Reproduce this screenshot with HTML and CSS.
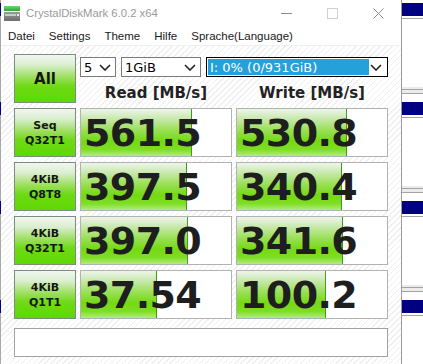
FILE: index.html
```html
<!DOCTYPE html>
<html>
<head>
<meta charset="utf-8">
<link rel="stylesheet" href="styles.css">
</head>
<body>
<div class="screen">
  <div class="bg-strip left"></div>
  <div class="window">
    <div class="titlebar">
      <svg class="app-icon" width="16" height="16" viewBox="0 0 16 16">
        <defs>
          <linearGradient id="gbar" x1="0" y1="0" x2="0" y2="1">
            <stop offset="0" stop-color="#6fd66f"/>
            <stop offset="1" stop-color="#2ea82e"/>
          </linearGradient>
          <linearGradient id="gbody" x1="0" y1="0" x2="0" y2="1">
            <stop offset="0" stop-color="#9a9a9a"/>
            <stop offset="1" stop-color="#6e6e6e"/>
          </linearGradient>
        </defs>
        <rect x="0" y="1" width="16" height="5" fill="url(#gbar)"/>
        <rect x="0" y="7" width="16" height="9" fill="url(#gbody)"/>
        <rect x="1" y="9" width="11" height="2" fill="#c9c9c9"/>
        <rect x="13" y="9" width="2" height="2" fill="#eeeeee"/>
      </svg>
      <span class="title">CrystalDiskMark 6.0.2 x64</span>
      <div class="caption-buttons">
        <div class="cap-btn">
          <svg width="11" height="11" viewBox="0 0 11 11"><line x1="0" y1="5.5" x2="11" y2="5.5" stroke="#8c8c8c" stroke-width="1"/></svg>
        </div>
        <div class="cap-btn">
          <svg width="11" height="11" viewBox="0 0 11 11"><rect x="0.5" y="0.5" width="10" height="10" fill="none" stroke="#d0d0d0" stroke-width="1"/></svg>
        </div>
        <div class="cap-btn">
          <svg width="11" height="11" viewBox="0 0 11 11"><path d="M0.5 0.5 L10.5 10.5 M10.5 0.5 L0.5 10.5" stroke="#8c8c8c" stroke-width="1" fill="none"/></svg>
        </div>
      </div>
    </div>
    <div class="menubar">
      <span class="menu-item">Datei</span>
      <span class="menu-item">Settings</span>
      <span class="menu-item">Theme</span>
      <span class="menu-item">Hilfe</span>
      <span class="menu-item">Sprache(Language)</span>
    </div>
    <div class="client">
      <div class="grid">
        <div class="btn all">All</div>
        <div class="head">
          <div class="selects">
            <div class="select s-count"><span>5</span>
              <svg class="chev" width="12" height="7" viewBox="0 0 12 7"><polyline points="1,1 6,6 11,1" fill="none" stroke="#222" stroke-width="1.6"/></svg>
            </div>
            <div class="select s-size"><span>1GiB</span>
              <svg class="chev" width="12" height="7" viewBox="0 0 12 7"><polyline points="1,1 6,6 11,1" fill="none" stroke="#222" stroke-width="1.6"/></svg>
            </div>
            <div class="select s-drive"><span class="sel-text">I: 0% (0/931GiB)</span>
              <svg class="chev" width="12" height="7" viewBox="0 0 12 7"><polyline points="1,1 6,6 11,1" fill="none" stroke="#222" stroke-width="1.6"/></svg>
            </div>
          </div>
          <div class="labels">
            <div class="label">Read [MB/s]</div>
            <div class="label">Write [MB/s]</div>
          </div>
        </div>

        <div class="btn">Seq<br>Q32T1</div>
        <div class="cell" style="--fill:74%">561.5</div>
        <div class="cell" style="--fill:73.3%">530.8</div>

        <div class="btn">4KiB<br>Q8T8</div>
        <div class="cell" style="--fill:70.7%">397.5</div>
        <div class="cell" style="--fill:70%">340.4</div>

        <div class="btn">4KiB<br>Q32T1</div>
        <div class="cell" style="--fill:71.3%">397.0</div>
        <div class="cell" style="--fill:70.7%">341.6</div>

        <div class="btn">4KiB<br>Q1T1</div>
        <div class="cell" style="--fill:50.7%">37.54</div>
        <div class="cell" style="--fill:59.3%">100.2</div>
      </div>
      <div class="comment"></div>
    </div>
  </div>
  <div class="bg-strip right"></div>
</div>
</body>
</html>
```

FILE: styles.css
```css
html, body {
  margin: 0;
  padding: 0;
}

body {
  width: 423px;
  height: 364px;
  overflow: hidden;
  background: #ffffff;
}

.screen {
  display: flex;
  height: 364px;
}

.bg-strip {
  flex: none;
  height: 100%;
}

.bg-strip.right {
  width: 21px;
  background: linear-gradient(to bottom,
      #ebebeb 0 2px, #a3a3a3 2px 3px, #ebebeb 3px 6px, #a3a3a3 6px 7px,
      #ffffff 7px 15px, #000080 15px 28px, #ffffff 28px 30px,
      #a3a3a3 30px 31px, #ffffff 31px 99px) 0 87px / 100% 99px repeat-y;
}

.bg-strip.left {
  width: 1px;
  background: linear-gradient(to bottom,
      #a9a9a9 0 15px, #000080 15px 28px, #a9a9a9 28px 99px) 0 87px / 100% 99px repeat-y;
}

.window {
  flex: none;
  width: 401px;
  height: 100%;
  box-sizing: border-box;
  border-right: 1px solid #9b9b9b;
  background: #ffffff;
  display: flex;
  flex-direction: column;
}

.titlebar {
  height: 26px;
  display: flex;
  align-items: center;
  flex: none;
}

.app-icon {
  margin-left: 3px;
  flex: none;
}

.title {
  margin-left: 6px;
  font-family: "Liberation Sans", Arial, sans-serif;
  font-size: 11.3px;
  color: #9a9a9a;
}

.caption-buttons {
  margin-left: auto;
  display: flex;
  height: 100%;
}

.cap-btn {
  width: 46px;
  height: 100%;
  display: flex;
  align-items: center;
  justify-content: center;
}

.menubar {
  height: 19px;
  border-bottom: 1px solid #f0f0f0;
  display: flex;
  align-items: center;
  flex: none;
  font-family: "Liberation Sans", Arial, sans-serif;
  font-size: 11.5px;
  color: #1a1a1a;
}

.menu-item {
  padding: 0 7px;
}

.client {
  flex: 1;
  padding: 8px 12px 0 13px;
  background: repeating-linear-gradient(135deg, #ffffff 0 3.2px, #efefef 3.2px 4.2px);
  display: flex;
  flex-direction: column;
}

.grid {
  display: grid;
  grid-template-columns: 62px 152px 152px;
  grid-template-rows: repeat(5, 49px);
  gap: 5px 4px;
}

.btn {
  box-sizing: border-box;
  border: 1px solid #7d8d7d;
  background: linear-gradient(to bottom, #f2f6f0 0%, #dcefd2 20%, #a2e068 45%, #6eda16 66%, #5fd802 100%);
  display: flex;
  align-items: center;
  justify-content: center;
  text-align: center;
  font-family: "DejaVu Sans", Verdana, sans-serif;
  font-weight: bold;
  font-size: 11px;
  line-height: 15px;
  color: #161616;
}

.btn.all {
  font-size: 15px;
  line-height: 18px;
}

.head {
  grid-column: 2 / 4;
  display: flex;
  flex-direction: column;
}

.selects {
  display: flex;
  gap: 5px;
  margin-top: 3px;
  height: 20px;
}

.select {
  box-sizing: border-box;
  height: 20px;
  border: 1px solid #7a7a7a;
  background: #ffffff;
  display: flex;
  align-items: center;
  padding-left: 3px;
  font-family: "DejaVu Sans", Verdana, sans-serif;
  font-size: 13px;
  color: #000000;
}

.s-count { width: 36px; }
.s-size { width: 80px; }

.s-drive {
  width: 182px;
  border-color: #000000;
  padding: 1px;
}

.chev {
  margin-left: auto;
  margin-right: 4px;
  flex: none;
}

.sel-text {
  background: #26a0da;
  color: #ffffff;
  align-self: stretch;
  width: 161px;
  padding-left: 2px;
  box-sizing: border-box;
  display: flex;
  align-items: center;
}

.labels {
  display: grid;
  grid-template-columns: 152px 152px;
  gap: 4px;
  margin-top: 7px;
}

.label {
  text-align: center;
  font-family: "DejaVu Sans", Verdana, sans-serif;
  font-weight: bold;
  font-size: 15px;
  line-height: 18px;
  color: #222222;
}

.cell {
  box-sizing: border-box;
  border: 1px solid #b2b2b2;
  display: flex;
  align-items: center;
  padding-left: 3px;
  font-family: "DejaVu Sans", Verdana, sans-serif;
  font-weight: bold;
  font-size: 38px;
  letter-spacing: -0.6px;
  color: #1e1e1e;
  background:
    linear-gradient(to left, #3c9a14 1px, transparent 1px) no-repeat 0 0 / var(--fill) 100%,
    linear-gradient(to bottom, #eef5ea 0%, #cdeab6 18%, #9ae056 45%, #74da12 68%, #7ede24 86%, #b2ec7e 100%) no-repeat 0 0 / var(--fill) 100%,
    #ffffff;
}

.comment {
  margin-top: 9px;
  height: 29px;
  width: 374px;
  box-sizing: border-box;
  border: 1px solid #a2a2a2;
  background: #ffffff;
}
```
